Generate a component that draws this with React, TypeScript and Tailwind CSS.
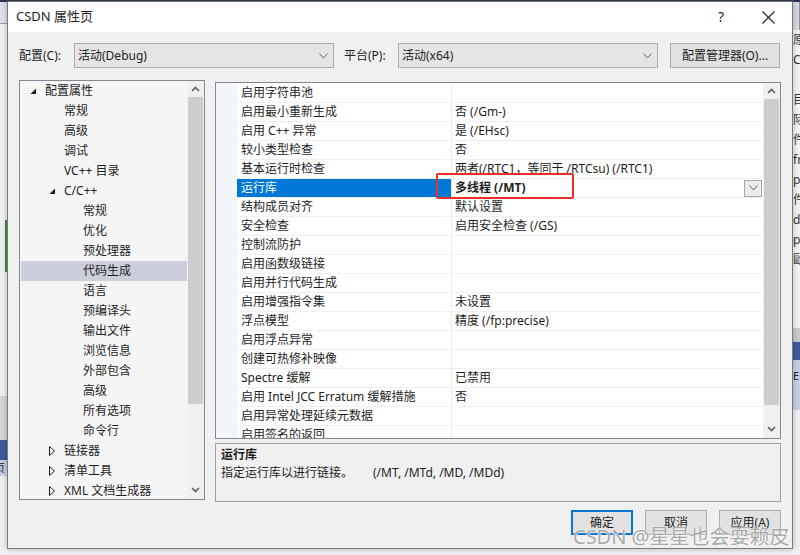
import React from "react";

type Node = [string, number, "open" | "closed" | null];

const treeItems: Node[] = [
  ["配置属性", 0, "open"],
  ["常规", 1, null],
  ["高级", 1, null],
  ["调试", 1, null],
  ["VC++ 目录", 1, null],
  ["C/C++", 1, "open"],
  ["常规", 2, null],
  ["优化", 2, null],
  ["预处理器", 2, null],
  ["代码生成", 2, null],
  ["语言", 2, null],
  ["预编译头", 2, null],
  ["输出文件", 2, null],
  ["浏览信息", 2, null],
  ["外部包含", 2, null],
  ["高级", 2, null],
  ["所有选项", 2, null],
  ["命令行", 2, null],
  ["链接器", 1, "closed"],
  ["清单工具", 1, "closed"],
  ["XML 文档生成器", 1, "closed"],
];

const props: [string, string][] = [
  ["启用字符串池", ""],
  ["启用最小重新生成", "否 (/Gm-)"],
  ["启用 C++ 异常", "是 (/EHsc)"],
  ["较小类型检查", "否"],
  ["基本运行时检查", "两者(/RTC1，等同于 /RTCsu) (/RTC1)"],
  ["运行库", "多线程 (/MT)"],
  ["结构成员对齐", "默认设置"],
  ["安全检查", "启用安全检查 (/GS)"],
  ["控制流防护", ""],
  ["启用函数级链接", ""],
  ["启用并行代码生成", ""],
  ["启用增强指令集", "未设置"],
  ["浮点模型", "精度 (/fp:precise)"],
  ["启用浮点异常", ""],
  ["创建可热修补映像", ""],
  ["Spectre 缓解", "已禁用"],
  ["启用 Intel JCC Erratum 缓解措施", "否"],
  ["启用异常处理延续元数据", ""],
  ["启用签名的返回", ""],
];

const Chevron = ({ up = false, className = "" }: { up?: boolean; className?: string }) => (
  <svg width="9" height="6" viewBox="0 0 9 6" className={className}>
    <path d={up ? "M0.5 5.5 L4.5 1 L8.5 5.5" : "M0.5 0.5 L4.5 5 L8.5 0.5"} fill="none" stroke="currentColor" strokeWidth="1" />
  </svg>
);

const ScrollArrow = ({ up = false }: { up?: boolean }) => (
  <svg width="9" height="6" viewBox="0 0 9 6">
    <path d={up ? "M1 5 L4.5 1.5 L8 5" : "M1 1 L4.5 4.5 L8 1"} fill="none" stroke="#606060" strokeWidth="1.6" />
  </svg>
);

const Expander = ({ open }: { open: boolean }) =>
  open ? (
    <svg width="7" height="7" viewBox="0 0 7 7">
      <path d="M6 0.5 L6 6 L0.5 6 Z" fill="#1e1e1e" />
    </svg>
  ) : (
    <svg width="6" height="10" viewBox="0 0 6 10">
      <path d="M0.5 0.5 L5.5 5 L0.5 9.5 Z" fill="none" stroke="#1e1e1e" strokeWidth="1" />
    </svg>
  );

const Combo = ({ text, width }: { text: string; width: string }) => (
  <div className={`${width} h-[25px] border border-[#adadad] bg-[#e5e5e5] flex items-center pl-[3px] pr-[5px]`}>
    <span className="flex-1">{text}</span>
    <Chevron className="text-[#606060]" />
  </div>
);

const Button = ({ label, primary = false }: { label: string; primary?: boolean }) => (
  <div
    className={`w-[62px] h-[25px] flex items-center justify-center bg-[#e1e1e1] ${
      primary ? "border-2 border-[#0078d7]" : "border border-[#adadad]"
    }`}
  >
    {label}
  </div>
);

export default function App() {
  return (
    <div className="relative w-[800px] h-[555px] overflow-hidden bg-[#eef0f3] text-[12px] text-[#1e1e1e] font-['Noto_Sans','Noto_Sans_CJK_SC',sans-serif]">
      {/* desktop behind the dialog */}
      <div className="absolute left-0 top-0 w-[800px] h-[2px] bg-[#2c3750]" />
      <div className="absolute left-0 top-[2px] w-[7px] h-[22px] bg-[#dde1e8] border-b border-[#9aa0aa]" />
      <div className="absolute left-[5px] top-[220px] w-[2px] h-[52px] bg-[#3f8f3a]" />
      <div className="absolute left-0 top-[396px] w-[7px] h-[44px] bg-[#d4d6db]" />
      <div className="absolute left-0 top-[440px] w-[7px] h-[20px] bg-[#3d5a98]" />
      <div className="absolute left-0 top-[460px] w-[7px] h-[16px] bg-[#c5cfe6] overflow-hidden leading-[16px] text-[11px]">
        <span className="ml-[-6px]">页(</span>
      </div>
      <div className="absolute left-[792px] top-[2px] w-[8px] h-[28px] bg-[#d6d9de] border-r border-[#8d939c]" />
      <div className="absolute left-[793px] top-[30px] w-[7px] h-[300px] bg-[#f3f3f3] overflow-hidden text-[12px] leading-[20px] text-[#333]">
        {["原", "Cs", "", "目", "际", "件", "fra", "po", "件", "dll", "po", "歐"].map((t, i) => (
          <div key={i} className="h-[20px] whitespace-nowrap">
            {t}
          </div>
        ))}
      </div>
      <div className="absolute left-[793px] top-[328px] w-[7px] h-[14px] bg-[#c8cacf]" />
      <div className="absolute left-[793px] top-[342px] w-[7px] h-[18px] bg-[#3d5a98]" />
      <div className="absolute left-[793px] top-[360px] w-[7px] h-[50px] bg-[#c5cfe6] overflow-hidden text-[11px] pt-[8px]">
        E
      </div>

      {/* dialog */}
      <div className="absolute left-[7px] top-[1px] w-[786px] h-[548px] border border-[#7a7a7a] bg-[#f0f0f0] flex flex-col shadow-[0_0_6px_rgba(0,0,0,0.25)]">
        <div className="h-[30px] bg-white flex items-center pl-[8px] shrink-0">
          <span className="text-[13px]">CSDN 属性页</span>
          <span className="ml-auto mr-[38px] text-[14px] leading-none">?</span>
          <svg width="13" height="13" viewBox="0 0 13 13" className="mr-[17px]">
            <path d="M0.5 0.5 L12.5 12.5 M12.5 0.5 L0.5 12.5" stroke="#1e1e1e" strokeWidth="1.1" />
          </svg>
        </div>

        <div className="flex-1 px-[11px]">
          {/* config row */}
          <div className="mt-[11px] flex items-center h-[25px]">
            <span className="w-[55px]">配置(C):</span>
            <Combo text="活动(Debug)" width="w-[260px]" />
            <span className="ml-[10px] w-[54px]">平台(P):</span>
            <Combo text="活动(x64)" width="w-[260px]" />
            <div className="ml-[12px] w-[110px] h-[25px] border border-[#adadad] bg-[#e1e1e1] flex items-center justify-center">
              配置管理器(O)...
            </div>
          </div>

          {/* content */}
          <div className="mt-[12px] flex">
            {/* tree */}
            <div className="w-[186px] h-[420px] border border-[#828790] bg-[#f5f5f5] flex overflow-hidden">
              <div className="flex-1 overflow-hidden">
                {treeItems.map(([label, level, state], i) => (
                  <div
                    key={i}
                    className={`h-[20px] flex items-center ml-[1px] whitespace-nowrap ${i === 9 ? "bg-[#cccedb]" : ""}`}
                    style={{ paddingLeft: 9 + level * 19 }}
                  >
                    <span className="w-[15px] flex items-center">{state && <Expander open={state === "open"} />}</span>
                    <span>{label}</span>
                  </div>
                ))}
              </div>
              <div className="w-[17px] bg-[#f0f0f0] flex flex-col items-center">
                <div className="h-[16px] flex items-center justify-center">
                  <ScrollArrow up />
                </div>
                <div className="w-[15px] h-[307px] bg-[#cdcdcd]" />
                <div className="flex-1" />
                <div className="h-[18px] flex items-center justify-center">
                  <ScrollArrow />
                </div>
              </div>
            </div>

            <div className="ml-[10px] w-[566px] flex flex-col">
              {/* property grid */}
              <div className="relative mt-[2px] h-[357px] border border-[#828790] bg-white flex">
                <div className="w-[21px] bg-[#f2f5fa]" />
                <div className="flex-1 overflow-hidden pt-[1px]">
                  {props.map(([name, value], i) => {
                    const sel = i === 5;
                    return (
                      <div key={i} className="h-[19px] flex border-b border-[#edf0f5] whitespace-nowrap">
                        <div
                          className={`w-[214px] pl-[4px] flex items-center ${sel ? "bg-[#0078d7] text-white" : ""}`}
                        >
                          {name}
                        </div>
                        <div className="w-[1px] bg-[#e6eaf1]" />
                        <div className={`flex-1 pl-[3px] flex items-center ${sel ? "font-bold" : ""}`}>
                          <span className="flex-1">{value}</span>
                          {sel && (
                            <div className="w-[18px] h-[17px] mr-[1px] border border-[#a8a8a8] bg-[#ececec] flex items-center justify-center text-[#606060]">
                              <Chevron />
                            </div>
                          )}
                        </div>
                      </div>
                    );
                  })}
                </div>
                <div className="w-[17px] bg-[#f0f0f0] flex flex-col items-center">
                  <div className="h-[16px] flex items-center justify-center">
                    <ScrollArrow up />
                  </div>
                  <div className="w-[15px] h-[306px] bg-[#cdcdcd]" />
                  <div className="flex-1" />
                  <div className="h-[18px] flex items-center justify-center">
                    <ScrollArrow />
                  </div>
                </div>
                {/* red annotation box */}
                <div className="absolute left-[220px] top-[90px] w-[138px] h-[26px] border-2 border-[#e8302a] rounded-[2px]" />
              </div>

              {/* description */}
              <div className="mt-[4px] h-[59px] border border-[#a0a0a0] bg-[#f0f0f0] pl-[5px] pt-[2px]">
                <div className="h-[18px] leading-[18px] font-bold">运行库</div>
                <div className="h-[18px] leading-[18px] flex whitespace-nowrap">
                  <span className="w-[152px]">指定运行库以进行链接。</span>
                  <span>(/MT, /MTd, /MD, /MDd)</span>
                </div>
              </div>
            </div>
          </div>

          {/* buttons */}
          <div className="mt-[8px] flex justify-end gap-[12px]">
            <Button label="确定" primary />
            <Button label="取消" />
            <Button label="应用(A)" />
          </div>
        </div>
      </div>

      {/* watermark */}
      <div className="absolute left-[573px] top-[524px] text-[20px] leading-[26px] text-[#a9a9a9] whitespace-nowrap [text-shadow:0_0_2px_#fff,0_0_1px_#fff]">
        CSDN @星星也会耍赖皮
      </div>
    </div>
  );
}
